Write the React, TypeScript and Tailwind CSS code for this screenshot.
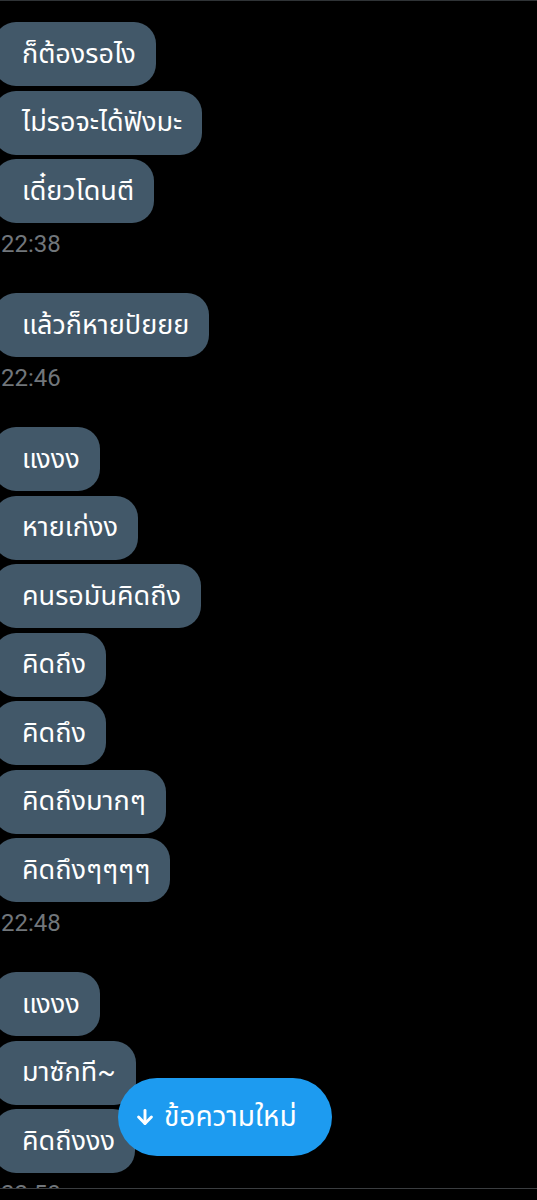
import { ArrowDown } from "lucide-react";

type Item = { kind: "msg"; text: string } | { kind: "time"; text: string };

const ITEMS: Item[] = [
  { kind: "msg", text: "ก็ต้องรอไง" },
  { kind: "msg", text: "ไม่รอจะได้ฟังมะ" },
  { kind: "msg", text: "เดี๋ยวโดนตี" },
  { kind: "time", text: "22:38" },
  { kind: "msg", text: "แล้วก็หายปัยยย" },
  { kind: "time", text: "22:46" },
  { kind: "msg", text: "แงงง" },
  { kind: "msg", text: "หายเก่งง" },
  { kind: "msg", text: "คนรอมันคิดถึง" },
  { kind: "msg", text: "คิดถึง" },
  { kind: "msg", text: "คิดถึง" },
  { kind: "msg", text: "คิดถึงมากๆ" },
  { kind: "msg", text: "คิดถึงๆๆๆๆ" },
  { kind: "time", text: "22:48" },
  { kind: "msg", text: "แงงง" },
  { kind: "msg", text: "มาซักที~" },
  { kind: "msg", text: "คิดถึงงง" },
  { kind: "time", text: "22:50" },
];

function Bubble({ text }: { text: string }) {
  return (
    <div className="-ml-[6px] mb-[4.5px] flex h-[64px] w-fit items-center rounded-[22px] bg-[#425869] pl-[28px] pr-[20px] text-[27px] leading-none text-white">
      {text}
    </div>
  );
}

function Stamp({ text }: { text: string }) {
  return (
    <div className="mb-[33.5px] pl-[1px] text-[24px] leading-[32px] text-[#71767b]">
      {text}
    </div>
  );
}

export default function App() {
  return (
    <div
      className="relative flex h-[1200px] w-[537px] flex-col overflow-hidden bg-black"
      style={{ fontFamily: '"Roboto", "Noto Sans", "Noto Sans Thai", sans-serif' }}
    >
      <div className="h-px shrink-0 bg-[#2f3336]" />
      <div className="h-[1187px] shrink-0 overflow-hidden pt-[21px]">
        {ITEMS.map((it, i) =>
          it.kind === "msg" ? <Bubble key={i} text={it.text} /> : <Stamp key={i} text={it.text} />
        )}
      </div>
      <div className="h-px shrink-0 bg-[#3a3d40]" />
      <div className="flex-1 bg-black" />

      <button
        type="button"
        className="absolute left-[118px] top-[1078px] flex h-[78px] w-[214px] items-center gap-[8px] rounded-full bg-[#1d9bf0] pl-[16px] text-[28px] text-white"
      >
        <ArrowDown size={22} strokeWidth={3.2} />
        <span className="leading-none">ข้อความใหม่</span>
      </button>
    </div>
  );
}
